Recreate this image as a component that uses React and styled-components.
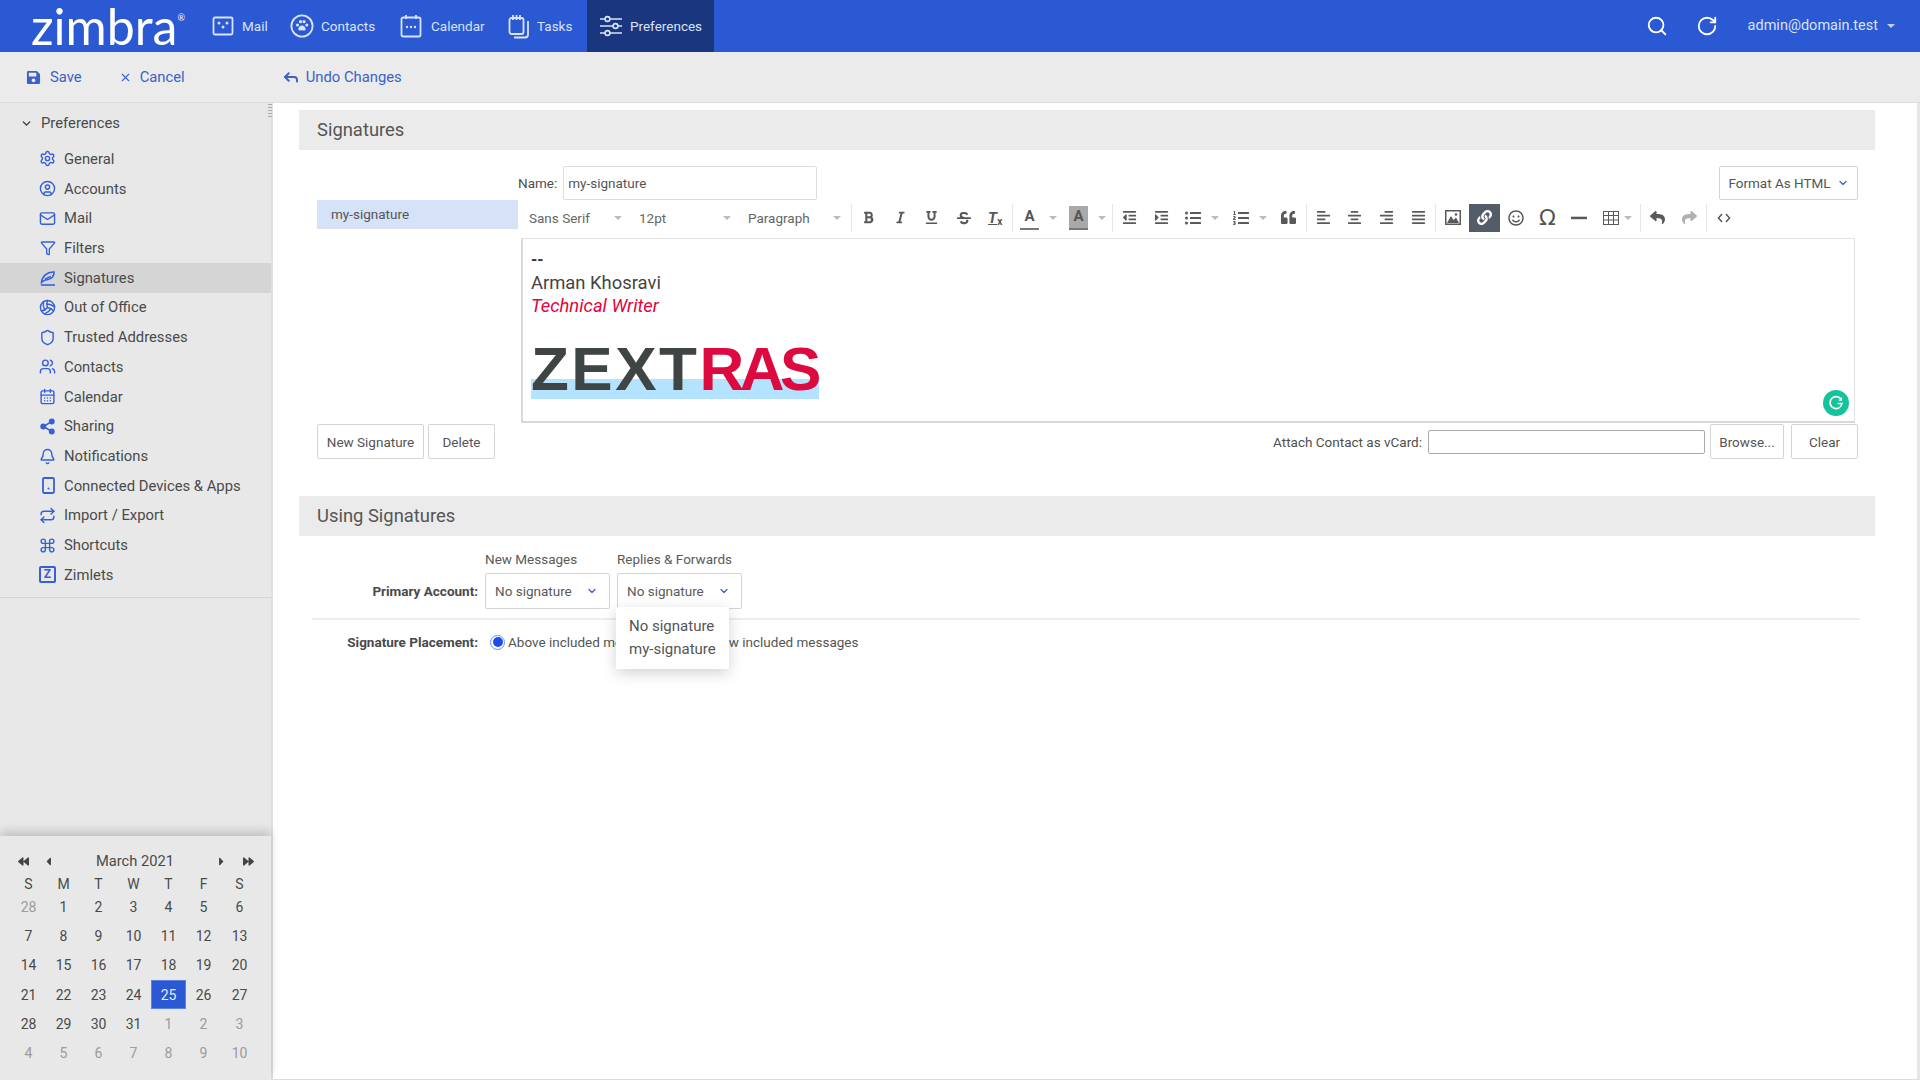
import React from 'react';
import styled, {createGlobalStyle} from 'styled-components';
import {
  Search,
  RotateCw,
  ChevronDown,
  X,
  Settings,
  CircleUser,
  Mail,
  Filter,
  Shield,
  Users,
  CalendarDays,
  Share2,
  Bell,
  Repeat,
  Command,
  Volleyball,
  Reply
} from 'lucide-react';
import {
  FaBold,
  FaItalic,
  FaUnderline,
  FaStrikethrough,
  FaOutdent,
  FaIndent,
  FaListUl,
  FaListOl,
  FaQuoteLeft,
  FaAlignLeft,
  FaAlignCenter,
  FaAlignRight,
  FaAlignJustify,
  FaLink,
  FaRegSmile,
  FaReply,
  FaShare,
  FaSave,
  FaCaretLeft,
  FaCaretRight,
  FaBackward,
  FaForward
} from 'react-icons/fa';

const BLUE = '#2b58d3';
const LINK = '#3b62c8';
const TEXT = '#555';

const Global = createGlobalStyle`
  html, body { margin: 0; padding: 0; height: 100%; overflow: hidden; }
  body { font-family: Roboto, "Liberation Sans", sans-serif; font-size: 13.5px; color: ${TEXT}; background: #fff; }
  * { box-sizing: border-box; }
`;

const Page = styled.div`
  width: 1920px;
  height: 1080px;
  display: flex;
  flex-direction: column;
  overflow: hidden;
`;

const TopBar = styled.header`
  height: 52px;
  background: ${BLUE};
  display: flex;
  align-items: stretch;
  color: #d9e3f8;
`;

const Logo = styled.div`
  width: 212px;
  height: 52px;
  padding-left: 31px;
  font-family: Lato, sans-serif;
  font-weight: 400;
  font-size: 50px;
  line-height: 52px;
  letter-spacing: 0;
  color: #fff;
  white-space: nowrap;
  sup {
    font-size: 9px;
    vertical-align: 24px;
    line-height: 0;
  }
`;

const NavItem = styled.div`
  width: ${p => p.$w}px;
  display: flex;
  align-items: center;
  gap: ${p => p.$gap || 8}px;
  padding-left: ${p => p.$pad || 0}px;
  background: ${p => (p.$active ? '#1a367f' : 'transparent')};
  margin-left: ${p => p.$ml || 0}px;
`;

const TopRight = styled.div`
  margin-left: auto;
  display: flex;
  align-items: center;
  padding-right: 25px;
`;

const UserName = styled.span`
  font-size: 14.5px;
  margin-left: 30px;
  margin-bottom: 2px;
`;

const Caret = styled.i`
  display: inline-block;
  width: 0;
  height: 0;
  border-left: 4px solid transparent;
  border-right: 4px solid transparent;
  border-top: 4px solid ${p => p.$color || '#bbb'};
  margin-left: ${p => p.$ml || 0}px;
`;

const ActionBar = styled.div`
  height: 51px;
  background: #ebebeb;
  border-bottom: 1px solid #dcdcdc;
  display: flex;
  align-items: center;
  color: ${LINK};
  font-size: 14.8px;
`;

const Action = styled.div`
  display: flex;
  align-items: center;
  gap: ${p => p.$gap}px;
  margin-left: ${p => p.$ml}px;
`;

const Body = styled.div`
  flex: 1;
  display: flex;
  min-height: 0;
`;

const Sidebar = styled.aside`
  position: relative;
  width: 273px;
  background: #e8e8e8;
  border-right: 2px solid #dfdfdf;
  display: flex;
  flex-direction: column;
`;

const DragHandle = styled.div`
  position: absolute;
  right: -1px;
  top: 1px;
  width: 4px;
  height: 15px;
  background: repeating-linear-gradient(to bottom, #aaa 0 1px, transparent 1px 3px);
`;

const TreeHead = styled.div`
  height: 41px;
  padding: 0 0 1px 20px;
  display: flex;
  align-items: center;
  gap: 8px;
  font-size: 14.8px;
  color: #4a4a4a;
`;

const Tree = styled.div`
  height: 495px;
  border-bottom: 1px solid #d4d4d4;
`;

const TreeRow = styled.div`
  height: 29.72px;
  display: flex;
  align-items: center;
  padding-left: 39px;
  gap: 8px;
  font-size: 14.8px;
  color: #4a4a4a;
  background: ${p => (p.$active ? '#d5d5d5' : 'transparent')};
`;

const IconSlot = styled.span`
  width: 17px;
  flex: none;
  display: flex;
  align-items: center;
  justify-content: center;
  color: #3560d8;
`;

const ZimletIcon = styled.span`
  width: 17px;
  height: 17px;
  border: 2px solid #3560d8;
  border-radius: 2px;
  color: #3560d8;
  font-size: 12px;
  font-weight: 700;
  line-height: 13px;
  text-align: center;
`;

const Calendar = styled.div`
  margin-top: auto;
  height: 244px;
  padding: 15px 11px 0;
  box-shadow: 0 -5px 9px rgba(0, 0, 0, 0.16);
  background: #e8e8e8;
`;

const MonthRow = styled.div`
  height: 20px;
  display: flex;
  align-items: center;
  color: #4a4a4a;
  font-size: 14.7px;
  padding: 0 6px 0 7px;
  svg { color: #444; }
`;

const MonthTitle = styled.div`
  flex: 1;
  text-align: center;
`;

const ArrowGap = styled.span`
  display: inline-flex;
  margin-left: ${p => p.$ml || 0}px;
`;

const DayGrid = styled.div`
  margin-top: 5px;
  display: grid;
  grid-template-columns: repeat(6, 35px) 37px;
  grid-template-rows: 16px repeat(6, 29.35px);
`;

const Cell = styled.div`
  display: flex;
  align-items: center;
  justify-content: center;
  font-size: 14px;
  color: ${p => (p.$today ? '#e4ebfb' : p.$muted ? '#9b9b9b' : '#4a4a4a')};
  background: ${p => (p.$today ? BLUE : 'transparent')};
  border: ${p => (p.$today ? '1px solid #5a80e4' : 'none')};
`;

const Content = styled.main`
  position: relative;
  flex: 1;
  padding: 7px 42px 0 26px;
  border-right: 3px solid #e6e6e6;
  border-bottom: 1px solid #ddd;
`;

const SectionHead = styled.h2`
  margin: 0;
  height: 40px;
  padding-left: 18px;
  background: #ebebeb;
  font-size: 18.4px;
  font-weight: 400;
  line-height: 40px;
  color: #555;
`;

const SigWrap = styled.div`
  margin-top: 16px;
  padding: 0 17px 0 18px;
  display: flex;
`;

const SigList = styled.div`
  width: 201px;
  margin-top: 34px;
  height: 29px;
  padding-left: 14px;
  background: #d5e2f7;
  line-height: 28px;
  flex: none;
`;

const EditorCol = styled.div`
  flex: 1;
  display: flex;
  flex-direction: column;
`;

const NameRow = styled.div`
  height: 34px;
  display: flex;
  align-items: center;
`;

const Label = styled.label`
  margin-right: 6px;
  white-space: nowrap;
  color: #4f4f4f;
`;

const TextField = styled.div`
  width: ${p => p.$w}px;
  height: ${p => p.$h}px;
  padding-left: 4px;
  background: #fff;
  border: 1px solid ${p => (p.$strong ? '#aaa' : '#ddd')};
  border-radius: 2px;
  line-height: ${p => p.$h - 2}px;
`;

const Button = styled.button`
  height: 35px;
  width: ${p => p.$w}px;
  margin-left: ${p => p.$ml || 0}px;
  background: #fff;
  border: 1px solid #d4d4d4;
  border-radius: 2px;
  font: inherit;
  color: ${TEXT};
  padding: 0;
  display: flex;
  align-items: center;
  justify-content: center;
  gap: 6px;
`;

const FormatButton = styled(Button)`
  margin-left: auto;
  height: 34px;
`;

const Toolbar = styled.div`
  height: 38px;
  padding: 0 3px 3px;
  display: flex;
  align-items: center;
`;

const Combo = styled.div`
  width: ${p => p.$w}px;
  padding-left: 8px;
  padding-right: 9px;
  display: flex;
  align-items: center;
  justify-content: space-between;
  color: #666;
`;

const Divider = styled.span`
  width: 1px;
  height: 28px;
  margin: 0 1px;
  background: #e6e6e6;
  flex: none;
`;

const ToolBtn = styled.div`
  width: ${p => p.$w || 31.6}px;
  height: 28px;
  padding-left: ${p => p.$pad || 0}px;
  display: flex;
  align-items: center;
  justify-content: ${p => (p.$pad ? 'flex-start' : 'center')};
  gap: ${p => p.$gap || 0}px;
  color: ${p => (p.$disabled ? '#b0b0b0' : p.$active ? '#fff' : '#595959')};
  background: ${p => (p.$active ? '#555c69' : 'transparent')};
  font-size: 15px;
  flex: none;
`;

const ColorLetter = styled.span`
  display: inline-block;
  width: 19px;
  height: 24px;
  text-align: center;
  font-size: 15px;
  font-weight: 700;
  line-height: 21px;
  color: #555;
  background: ${p => (p.$bg ? '#a9a9a9' : 'transparent')};
  border-bottom: 2px solid #777;
`;

const ClearLetter = styled.span`
  font-style: italic;
  font-weight: 700;
  font-size: 15px;
  color: #555;
  text-decoration: underline;
  sub { font-size: 10px; font-style: normal; vertical-align: -2px; text-decoration: none; display: inline-block; }
`;

const Omega = styled.span`
  font-size: 22px;
  line-height: 24px;
  font-family: "DejaVu Sans", sans-serif;
  color: #555;
`;

const EditorBody = styled.div`
  position: relative;
  margin: 0 3px;
  height: 185px;
  border: 1px solid #e2e2e2;
  border-left: 2px solid #d8d8d8;
  border-bottom: 2px solid #d8d8d8;
  padding: 11px 8px;
  font-size: 18.4px;
  line-height: 23px;
  color: #444;
`;

const Dashes = styled.div`
  font-size: 16px;
  font-weight: 700;
  line-height: 20px;
  color: #333;
  margin-bottom: 1px;
`;

const RedLine = styled.div`
  color: #e8003d;
  font-style: italic;
`;

const ZextrasLogo = styled.div`
  margin-top: 30px;
  width: 288px;
  height: 52px;
  font-family: "Liberation Sans", sans-serif;
  font-weight: 700;
  font-size: 62px;
  line-height: 43px;
  letter-spacing: 2.5px;
  white-space: nowrap;
  color: #3f4444;
  background: linear-gradient(to bottom, transparent 32px, #b3e3ff 32px);
  b { color: #dc0a3e; font-weight: 700; letter-spacing: -4.5px; }
`;

const Grammarly = styled.div`
  position: absolute;
  right: 5px;
  bottom: 5px;
  width: 26px;
  height: 26px;
  border-radius: 50%;
  background: #15c39a;
  display: flex;
  align-items: center;
  justify-content: center;
`;

const SigFooter = styled.div`
  padding: 0 17px 0 18px;
  margin-top: 1px;
  display: flex;
  align-items: center;
`;

const AttachGroup = styled.div`
  margin-left: auto;
  display: flex;
  align-items: center;
`;

const UsingSection = styled.section`
  margin-top: 37px;
`;

const PrefGrid = styled.div`
  padding: 0 15px 0 13px;
`;

const PrefRow = styled.div`
  display: flex;
  align-items: center;
  height: ${p => p.$h}px;
  margin-top: ${p => p.$mt || 0}px;
`;

const PrefLabel = styled.div`
  width: 166px;
  margin-right: 7px;
  padding-bottom: 1px;
  text-align: right;
  font-weight: 700;
  color: #4a4a4a;
`;

const ColTitle = styled.div`
  width: 125px;
  margin-right: 7px;
  color: #5a5a5a;
  white-space: nowrap;
`;

const SelectWrap = styled.div`
  position: relative;
  width: 125px;
  margin-right: 7px;
`;

const Select = styled.div`
  height: 36px;
  padding: 0 11px 0 9px;
  display: flex;
  align-items: center;
  justify-content: space-between;
  border: 1px solid #d4d4d4;
  border-radius: 2px;
  background: #fff;
  color: #5a5a5a;
  svg { color: ${LINK}; }
`;

const Menu = styled.div`
  position: absolute;
  z-index: 3;
  top: 34px;
  left: -1px;
  width: 113px;
  height: 62px;
  padding: 8px 0 0 13px;
  background: #fff;
  box-shadow: 0 4px 14px rgba(0, 0, 0, 0.18);
  font-size: 15px;
  line-height: 23px;
  color: #555;
`;

const Rule = styled.hr`
  margin: 9px 0 0;
  border: 0;
  height: 2px;
  background: #eee;
`;

const RadioDot = styled.span`
  width: 15px;
  height: 15px;
  border-radius: 50%;
  border: 1.5px solid #6c8ff0;
  display: inline-flex;
  align-items: center;
  justify-content: center;
  margin: 0 3px 0 5px;
  flex: none;
  &::after {
    content: '';
    width: 10px;
    height: 10px;
    border-radius: 50%;
    background: #1f4de8;
  }
`;

const RadioOff = styled(RadioDot)`
  &::after { display: none; }
`;

const RadioText = styled.span`
  white-space: nowrap;
  margin-right: ${p => p.$mr || 0}px;
`;

// hand drawn icons, none of these exist in the packages as they look here
const MailTile = () => (
  <svg width="22" height="20" viewBox="0 0 22 20" fill="none" stroke="currentColor" strokeWidth="1.8">
    <rect x="1.5" y="1.5" width="19" height="17" rx="1.5" />
    <g fill="currentColor" stroke="none">
      <circle cx="7" cy="7" r="1.5" />
      <circle cx="15" cy="7" r="1.5" />
      <circle cx="11" cy="11" r="1.5" />
    </g>
  </svg>
);

const PawTile = () => (
  <svg width="24" height="24" viewBox="0 0 24 24" fill="none" stroke="currentColor" strokeWidth="1.8">
    <circle cx="12" cy="12" r="10.6" />
    <g fill="currentColor" stroke="none">
      <circle cx="7.5" cy="11" r="1.6" />
      <circle cx="10.5" cy="7.7" r="1.6" />
      <circle cx="14" cy="7.7" r="1.6" />
      <circle cx="16.8" cy="11" r="1.6" />
      <path d="M12 11.5c2.5 0 4 2.6 3.6 4.1-.4 1.5-2.2.6-3.6.6s-3.2.9-3.6-.6c-.4-1.5 1.1-4.1 3.6-4.1z" />
    </g>
  </svg>
);

const CalTile = () => (
  <svg width="22" height="24" viewBox="0 0 22 24" fill="none" stroke="currentColor" strokeWidth="1.8">
    <rect x="1.5" y="3.5" width="19" height="19" rx="1.8" />
    <path d="M6 1v4M16 1v4" />
    <g fill="currentColor" stroke="none">
      <circle cx="7" cy="13" r="1.2" />
      <circle cx="11" cy="13" r="1.2" />
      <circle cx="15" cy="13" r="1.2" />
    </g>
  </svg>
);

const TasksTile = () => (
  <svg width="22" height="25" viewBox="0 0 22 25" fill="none" stroke="currentColor" strokeWidth="1.8">
    <rect x="1.5" y="4" width="14" height="16" rx="2" />
    <path d="M5 1v5M8.5 1v5M12 1v5" />
    <path d="M20 7v13.5a3 3 0 0 1-3 3H6" />
  </svg>
);

const PrefTile = () => (
  <svg width="24" height="22" viewBox="0 0 24 22" fill="none" stroke="currentColor" strokeWidth="1.6">
    <path d="M1 4h5M11 4h12M1 11h13M19 11h4M1 18h5M11 18h12" />
    <circle cx="8.5" cy="4" r="2.4" />
    <circle cx="16.5" cy="11" r="2.4" />
    <circle cx="8.5" cy="18" r="2.4" />
  </svg>
);

const SignatureIcon = () => (
  <svg width="16" height="16" viewBox="0 0 16 16" fill="none" stroke="currentColor" strokeWidth="1.6">
    <path d="M1 15h14" />
    <path d="M1.5 12.5C2 6.5 7 1.5 14 2c.3 3.5-2 7-6 7.5-2 .2-4.5 1-6.5 3z" />
    <path d="M5 9.5c2-1.5 4-2.5 6-3" />
  </svg>
);

const DeviceIcon = () => (
  <svg width="16" height="17" viewBox="0 0 16 17" fill="none" stroke="currentColor" strokeWidth="1.8">
    <rect x="3" y="1" width="11" height="15" rx="1.2" />
    <circle cx="8.5" cy="11.5" r="1" fill="currentColor" stroke="none" />
  </svg>
);

const ImageIcon = () => (
  <svg width="16" height="15" viewBox="0 0 16 15">
    <path fill="#595959" d="M0 0h16v15H0zM1.5 1.5v12h13v-12z" fillRule="evenodd" />
    <path fill="#595959" d="M2 13l4-7 2.5 4 2.5-2.5 3 5.5z" />
    <circle cx="11" cy="4.5" r="1.3" fill="#595959" />
  </svg>
);

const TableIcon = () => (
  <svg width="16" height="14" viewBox="0 0 16 14" fill="none" stroke="#595959" strokeWidth="1">
    <rect x="0.5" y="0.5" width="15" height="13" />
    <path d="M5.5 0v14M10.5 0v14M0 4.5h16M0 9h16" />
  </svg>
);

const HrIcon = () => (
  <svg width="16" height="4" viewBox="0 0 16 4">
    <rect width="16" height="2.5" y="0.7" fill="#595959" />
  </svg>
);

const CodeIcon = () => (
  <svg width="14" height="10" viewBox="0 0 14 10" fill="none" stroke="#595959" strokeWidth="1.5">
    <path d="M5 1L1.5 5 5 9M9 1l3.5 4L9 9" />
  </svg>
);

const GrammarlyIcon = () => (
  <svg width="16" height="16" viewBox="0 0 16 16" fill="none" stroke="#fff" strokeWidth="1.6">
    <path d="M13 4.2A6 6 0 1 0 14 8.5H9.5" />
    <path d="M13.5 2.5v2.7h-2.6" strokeWidth="1.2" />
  </svg>
);

const NAV = [
  {label: 'Mail', icon: <MailTile />, w: 78},
  {label: 'Contacts', icon: <PawTile />, w: 110, gap: 7},
  {label: 'Calendar', icon: <CalTile />, w: 108, gap: 9},
  {label: 'Tasks', icon: <TasksTile />, w: 78, gap: 7}
];

const TREE = [
  ['General', <Settings size={17} strokeWidth={2} />],
  ['Accounts', <CircleUser size={17} strokeWidth={2} />],
  ['Mail', <Mail size={17} strokeWidth={2} />],
  ['Filters', <Filter size={16} strokeWidth={2} />],
  ['Signatures', <SignatureIcon />],
  ['Out of Office', <Volleyball size={17} strokeWidth={2} />],
  ['Trusted Addresses', <Shield size={17} strokeWidth={2} />],
  ['Contacts', <Users size={17} strokeWidth={2} />],
  ['Calendar', <CalendarDays size={17} strokeWidth={2} />],
  ['Sharing', <Share2 size={17} strokeWidth={2.4} fill="currentColor" />],
  ['Notifications', <Bell size={17} strokeWidth={2} />],
  ['Connected Devices & Apps', <DeviceIcon />],
  ['Import / Export', <Repeat size={17} strokeWidth={2} />],
  ['Shortcuts', <Command size={17} strokeWidth={2} />],
  ['Zimlets', <ZimletIcon>Z</ZimletIcon>]
];

const WEEKDAYS = ['S', 'M', 'T', 'W', 'T', 'F', 'S'];
const DAYS = [
  28, 1, 2, 3, 4, 5, 6, 7, 8, 9, 10, 11, 12, 13, 14, 15, 16, 17, 18, 19, 20, 21, 22, 23, 24, 25, 26, 27, 28, 29, 30,
  31, 1, 2, 3, 4, 5, 6, 7, 8, 9, 10
];

const App = () => (
  <Page>
    <Global />
    <TopBar>
      <Logo>
        zimbra<sup>®</sup>
      </Logo>
      {NAV.map(item => (
        <NavItem key={item.label} $w={item.w} $gap={item.gap}>
          {item.icon}
          {item.label}
        </NavItem>
      ))}
      <NavItem $active $w={127} $pad={12} $gap={7} $ml={1}>
        <PrefTile />
        Preferences
      </NavItem>
      <TopRight>
        <Search size={22} strokeWidth={2} color="#fff" style={{marginRight: 28}} />
        <RotateCw size={22} strokeWidth={2} color="#fff" />
        <UserName>admin@domain.test</UserName>
        <Caret $ml={9} $color="#c4d2f2" />
      </TopRight>
    </TopBar>

    <ActionBar>
      <Action $ml={26} $gap={9}>
        <FaSave size={15} />
        Save
      </Action>
      <Action $ml={37} $gap={8}>
        <X size={13} strokeWidth={2} />
        Cancel
      </Action>
      <Action $ml={97} $gap={6}>
        <Reply size={18} strokeWidth={2.6} />
        Undo Changes
      </Action>
    </ActionBar>

    <Body>
      <Sidebar>
        <DragHandle />
        <Tree>
          <TreeHead>
            <ChevronDown size={13} strokeWidth={2.5} color="#333" />
            Preferences
          </TreeHead>
          {TREE.map(([label, icon]) => (
            <TreeRow key={label} $active={label === 'Signatures'}>
              <IconSlot>{icon}</IconSlot>
              {label}
            </TreeRow>
          ))}
        </Tree>
        <Calendar>
          <MonthRow>
            <FaBackward size={11} />
            <ArrowGap $ml={13}>
              <FaCaretLeft size={13} />
            </ArrowGap>
            <MonthTitle>March 2021</MonthTitle>
            <FaCaretRight size={13} />
            <ArrowGap $ml={15}>
              <FaForward size={11} />
            </ArrowGap>
          </MonthRow>
          <DayGrid>
            {WEEKDAYS.map((d, i) => (
              <Cell key={i}>{d}</Cell>
            ))}
            {DAYS.map((d, i) => (
              <Cell key={i} $muted={i === 0 || i > 31} $today={i === 25}>
                {d}
              </Cell>
            ))}
          </DayGrid>
        </Calendar>
      </Sidebar>

      <Content>
        <SectionHead>Signatures</SectionHead>
        <SigWrap>
          <SigList>my-signature</SigList>
          <EditorCol>
            <NameRow>
              <Label>Name:</Label>
              <TextField $w={254} $h={34}>
                my-signature
              </TextField>
              <FormatButton $w={139}>
                Format As HTML
                <ChevronDown size={12} color={LINK} strokeWidth={2.5} />
              </FormatButton>
            </NameRow>
            <Toolbar>
              <Combo $w={110}>
                Sans Serif <Caret />
              </Combo>
              <Combo $w={109}>
                12pt <Caret />
              </Combo>
              <Combo $w={110}>
                Paragraph <Caret />
              </Combo>
              <Divider />
              <ToolBtn><FaBold size={13} /></ToolBtn>
              <ToolBtn><FaItalic size={13} /></ToolBtn>
              <ToolBtn><FaUnderline size={13} /></ToolBtn>
              <ToolBtn><FaStrikethrough size={14} /></ToolBtn>
              <ToolBtn>
                <ClearLetter>
                  T<sub>x</sub>
                </ClearLetter>
              </ToolBtn>
              <Divider />
              <ToolBtn $w={48} $pad={6} $gap={10}>
                <ColorLetter>A</ColorLetter>
                <Caret />
              </ToolBtn>
              <ToolBtn $w={48.8} $pad={7} $gap={10}>
                <ColorLetter $bg>A</ColorLetter>
                <Caret />
              </ToolBtn>
              <Divider />
              <ToolBtn><FaOutdent size={15} /></ToolBtn>
              <ToolBtn><FaIndent size={15} /></ToolBtn>
              <ToolBtn $w={48} $pad={8} $gap={10}>
                <FaListUl size={16} />
                <Caret />
              </ToolBtn>
              <ToolBtn $w={48} $pad={8} $gap={10}>
                <FaListOl size={16} />
                <Caret />
              </ToolBtn>
              <ToolBtn><FaQuoteLeft size={15} /></ToolBtn>
              <Divider />
              <ToolBtn><FaAlignLeft size={15} /></ToolBtn>
              <ToolBtn><FaAlignCenter size={15} /></ToolBtn>
              <ToolBtn><FaAlignRight size={15} /></ToolBtn>
              <ToolBtn><FaAlignJustify size={15} /></ToolBtn>
              <Divider />
              <ToolBtn><ImageIcon /></ToolBtn>
              <ToolBtn $active><FaLink size={15} /></ToolBtn>
              <ToolBtn><FaRegSmile size={16} /></ToolBtn>
              <ToolBtn><Omega>Ω</Omega></ToolBtn>
              <ToolBtn><HrIcon /></ToolBtn>
              <ToolBtn $w={44} $pad={8} $gap={5}>
                <TableIcon />
                <Caret />
              </ToolBtn>
              <Divider />
              <ToolBtn><FaReply size={15} /></ToolBtn>
              <ToolBtn $disabled><FaShare size={15} /></ToolBtn>
              <Divider />
              <ToolBtn><CodeIcon /></ToolBtn>
            </Toolbar>
            <EditorBody>
              <Dashes>--</Dashes>
              <div>Arman Khosravi</div>
              <RedLine>Technical Writer</RedLine>
              <ZextrasLogo>
                ZEXT<b>RAS</b>
              </ZextrasLogo>
              <Grammarly>
                <GrammarlyIcon />
              </Grammarly>
            </EditorBody>
          </EditorCol>
        </SigWrap>
        <SigFooter>
          <Button $w={107}>New Signature</Button>
          <Button $w={67} $ml={4}>
            Delete
          </Button>
          <AttachGroup>
            <Label>Attach Contact as vCard:</Label>
            <TextField $w={277} $h={24} $strong />
            <Button $w={74} $ml={5}>
              Browse...
            </Button>
            <Button $w={67} $ml={7}>
              Clear
            </Button>
          </AttachGroup>
        </SigFooter>

        <UsingSection>
          <SectionHead>Using Signatures</SectionHead>
          <PrefGrid>
            <PrefRow $h={18} $mt={14}>
              <PrefLabel />
              <ColTitle>New Messages</ColTitle>
              <ColTitle>Replies &amp; Forwards</ColTitle>
            </PrefRow>
            <PrefRow $h={36} $mt={5}>
              <PrefLabel>Primary Account:</PrefLabel>
              <SelectWrap>
                <Select>
                  No signature
                  <ChevronDown size={12} strokeWidth={2.5} />
                </Select>
              </SelectWrap>
              <SelectWrap>
                <Select>
                  No signature
                  <ChevronDown size={12} strokeWidth={2.5} />
                </Select>
                <Menu>
                  <div>No signature</div>
                  <div>my-signature</div>
                </Menu>
              </SelectWrap>
            </PrefRow>
            <Rule />
            <PrefRow $h={20} $mt={12}>
              <PrefLabel>Signature Placement:</PrefLabel>
              <RadioDot />
              <RadioText $mr={14}>Above included messages</RadioText>
              <RadioOff />
              <RadioText>Below included messages</RadioText>
            </PrefRow>
          </PrefGrid>
        </UsingSection>
      </Content>
    </Body>
  </Page>
);

export default App;
